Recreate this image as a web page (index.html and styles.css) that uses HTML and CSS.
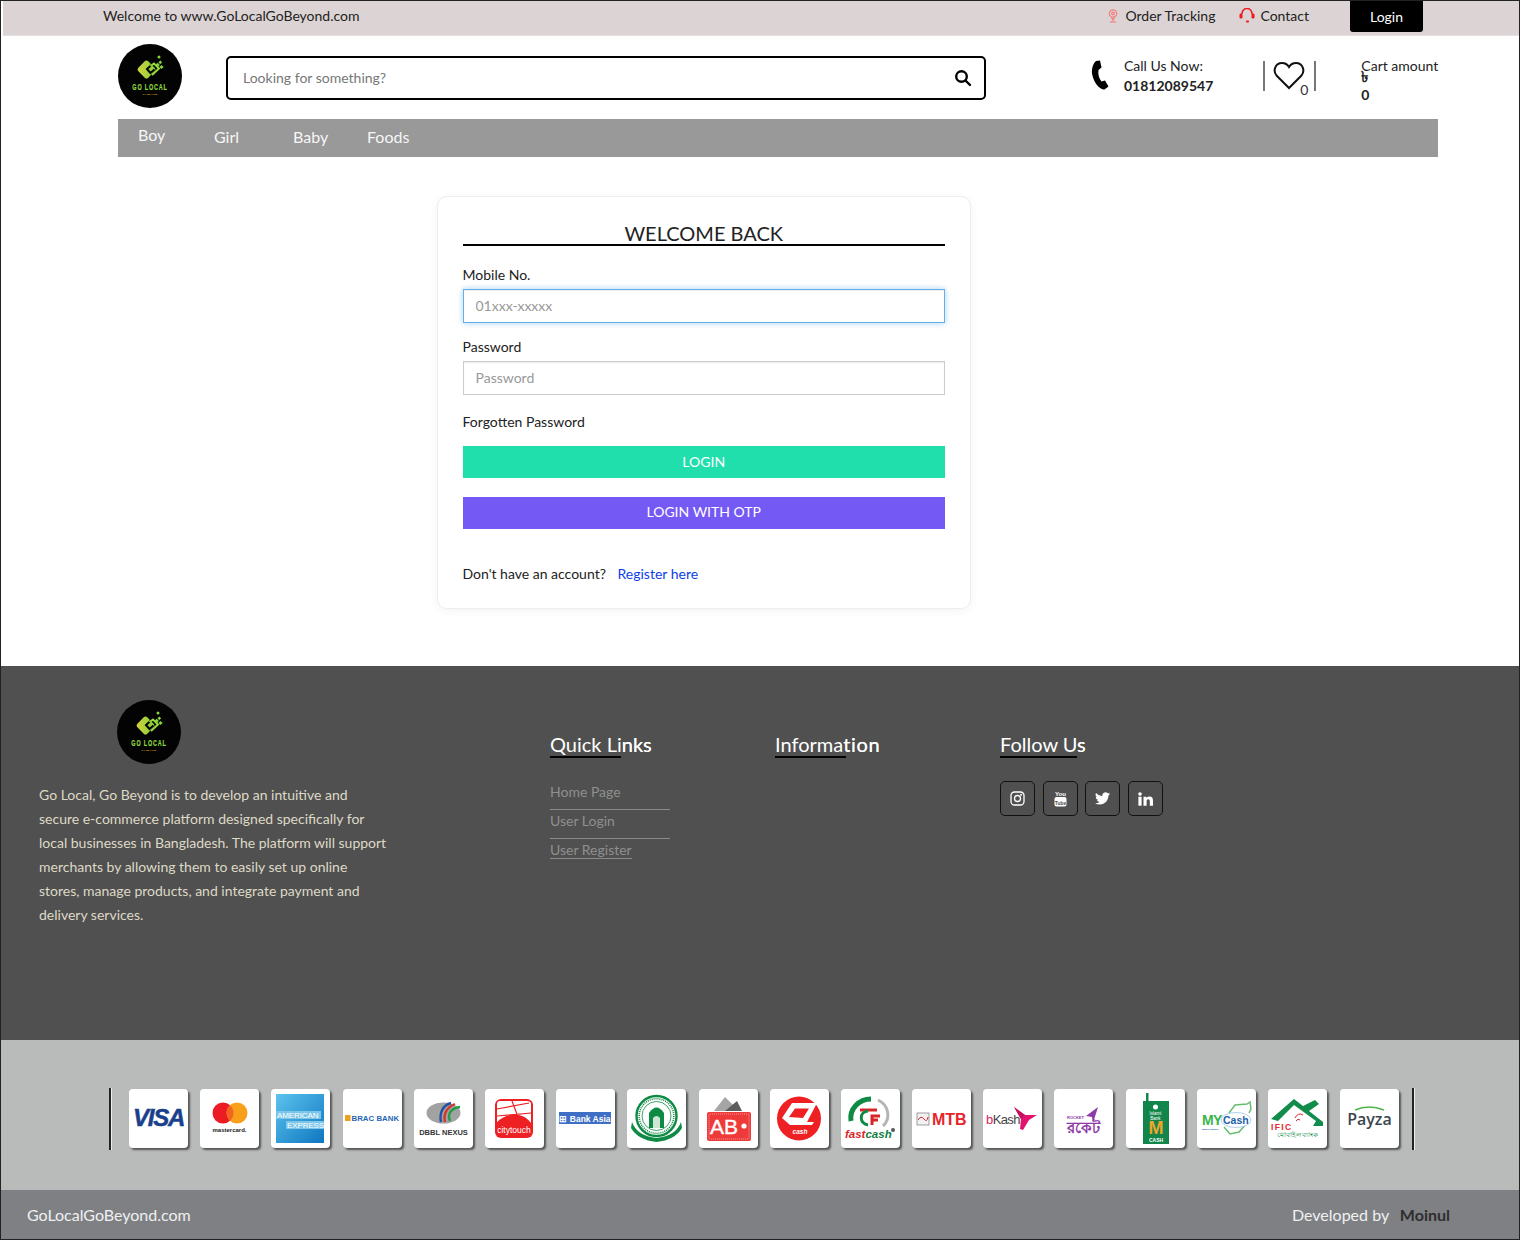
FILE: index.html
```html
<!DOCTYPE html>
<html lang="en">
<head>
  <meta charset="UTF-8" />
  <meta name="viewport" content="width=device-width, initial-scale=1.0"/>
  <title>Go Local Go Beyond - Login</title>
  <link rel="stylesheet" href="styles.css">
</head>
<body>

<svg class="defs" width="0" height="0">
  <defs>
    <linearGradient id="logoGrad" x1="0" y1="1" x2="1" y2="0">
      <stop offset="0" stop-color="#d8d23c"/>
      <stop offset="1" stop-color="#7ccf3c"/>
    </linearGradient>
    <linearGradient id="amexGrad" x1="0" y1="0" x2="1" y2="1">
      <stop offset="0" stop-color="#5cc3ee"/>
      <stop offset="1" stop-color="#0f76c1"/>
    </linearGradient>
    <symbol id="logo" viewBox="0 0 64 64">
      <circle cx="32" cy="32" r="32" fill="#030303"/>
      <rect x="21.500" y="18.500" width="14" height="14" rx="2.500" fill="url(#logoGrad)" transform="rotate(45 28.500 25.500)"/>
      <path d="M34 20.500 L29 25 L32.500 29 L36.500 25.500" fill="none" stroke="#030303" stroke-width="2"/>
      <path d="M32.500 22 L36 19.500 L41 24.500 L34 31" fill="none" stroke="#9ad93e" stroke-width="2"/>
      <rect x="38" y="19.500" width="3.200" height="3.200" fill="#86d63c" transform="rotate(45 39.600 21.100)"/>
      <rect x="42" y="21.500" width="3" height="3" fill="#86d63c" transform="rotate(45 43.500 23)"/>
      <rect x="41" y="17" width="2.600" height="2.600" fill="#86d63c" transform="rotate(45 42.300 18.300)"/>
      <circle cx="41" cy="13" r="1.500" fill="#86d63c"/>
      <text class="logo-name" transform="translate(32 46) scale(.64 1)" text-anchor="middle">GO LOCAL</text>
      <text class="logo-sub" x="32" y="51" text-anchor="middle">GO BEYOND</text>
    </symbol>
  </defs>
</svg>

<div class="page">

  <div class="topbar">
    <span class="welcome">Welcome to www.GoLocalGoBeyond.com</span>
    <div class="topbar-links">
      <a class="top-link track" href="#">
        <svg width="10" height="14" viewBox="0 0 10 14" fill="none" stroke="#f2807c" stroke-width="1.300">
          <circle cx="5" cy="4.500" r="3.700"/><circle cx="5" cy="4.500" r="1.300"/>
          <path d="M3.500 8.500 L5 11 L6.500 8.500 M2 12.800 H8"/>
        </svg>
        Order Tracking
      </a>
      <a class="top-link contact" href="#">
        <svg width="16" height="15" viewBox="0 0 16 15" fill="none" stroke="#f0191e" stroke-width="1.500">
          <path d="M3 6 V5.500 a5 5 0 0 1 10 0 V6"/>
          <rect x="0.500" y="5.500" width="3" height="5" rx="1.200" fill="#f0191e" stroke="none"/>
          <rect x="12.500" y="5.500" width="3" height="5" rx="1.200" fill="#f0191e" stroke="none"/>
          <rect x="7" y="12.500" width="3" height="2" rx=".8" fill="#f0191e" stroke="none"/>
        </svg>
        Contact
      </a>
      <a class="login-btn" href="#">Login</a>
    </div>
  </div>

  <header class="header">
    <svg class="logo"><use href="#logo"/></svg>
    <div class="search">
      <span class="search-text">Looking for something?</span>
      <svg width="18" height="18" viewBox="0 0 18 18" fill="none" stroke="#000" stroke-width="2.400">
        <circle cx="7.500" cy="7.500" r="5.300"/><path d="M11.500 11.500 L16 16" stroke-linecap="round"/>
      </svg>
    </div>
    <div class="call">
      <svg class="call-icon" width="18" height="30" viewBox="0 0 18 30">
        <path d="M5 1 L9 0.500 L10.500 7.500 L7.500 10 C6.800 14 8 18.500 10.500 21.500 L14 20.500 L17.500 26.500 L13.500 29.500 C9 30 3 23 1.300 15 C0.300 10 1.500 4 5 1z" fill="#000"/>
      </svg>
      <div class="call-text">
        <div>Call Us Now:</div>
        <div class="call-number">01812089547</div>
      </div>
    </div>
    <div class="wish">
      <svg width="32" height="30" viewBox="0 0 32 30" fill="none" stroke="#111" stroke-width="2">
        <path d="M16 27 L3.500 14.500 C-0.500 9.500 2.500 2 9 2 C12 2 14.500 3.500 16 6 C17.500 3.500 20 2 23 2 C29.500 2 32.500 9.500 28.500 14.500z"/>
      </svg>
      <span class="wish-count">0</span>
    </div>
    <div class="cart">
      <div>Cart amount</div>
      <div class="taka">৳</div>
      <div class="cart-value">0</div>
    </div>
  </header>

  <nav class="nav">
    <a class="nav-boy" href="#">Boy</a>
    <a class="nav-girl" href="#">Girl</a>
    <a class="nav-baby" href="#">Baby</a>
    <a class="nav-foods" href="#">Foods</a>
  </nav>

  <main class="main">
    <form class="login-card">
      <h2 class="card-title"><span>WELCOME BACK</span></h2>

      <label class="field-label" for="mobile">Mobile No.</label>
      <input class="field is-focus" id="mobile" type="text" placeholder="01xxx-xxxxx" />

      <label class="field-label second" for="password">Password</label>
      <input class="field" id="password" type="password" placeholder="Password" />

      <div class="forgot">Forgotten Password</div>

      <button class="btn btn-login" type="button">LOGIN</button>
      <button class="btn btn-otp" type="button">LOGIN WITH OTP</button>

      <p class="register">Don't have an account? <a href="#">Register here</a></p>
    </form>
  </main>

  <footer>
    <div class="footer-main">
      <div class="about">
        <svg class="logo footer-logo"><use href="#logo"/></svg>
        <p>Go Local, Go Beyond is to develop an intuitive and secure e-commerce platform designed specifically for local businesses in Bangladesh. The platform will support merchants by allowing them to easily set up online stores, manage products, and integrate payment and delivery services.</p>
      </div>
      <div class="foot-col">
        <h3 class="foot-title"><span>Quick Li<i class="tail">nks</i></span></h3>
        <ul class="foot-links">
          <li><a href="#">Home Page</a></li>
          <li><a href="#">User Login</a></li>
          <li><a class="last-link" href="#">User Register</a></li>
        </ul>
      </div>
      <div class="foot-col">
        <h3 class="foot-title"><span>Informa<i class="tail tail-wide">tion</i></span></h3>
      </div>
      <div class="foot-col">
        <h3 class="foot-title"><span class="w-follow">Follow U<i class="tail">s</i></span></h3>
        <div class="socials">
          <a class="social" href="#">
            <svg width="15" height="15" viewBox="0 0 15 15" fill="none" stroke="#fff" stroke-width="1.300">
              <rect x="1" y="1" width="13" height="13" rx="3.500"/><circle cx="7.500" cy="7.500" r="3"/><circle cx="11.200" cy="3.800" r=".4"/>
            </svg>
          </a>
          <a class="social" href="#">
            <svg width="13" height="17" viewBox="0 0 13 17">
              <text class="yt-you" x="6.500" y="5.500" text-anchor="middle">You</text>
              <rect x="0.500" y="7" width="12" height="9.500" rx="2" fill="#fff"/>
              <text class="yt-tube" x="6.500" y="14.500" text-anchor="middle">Tube</text>
            </svg>
          </a>
          <a class="social" href="#">
            <svg width="15" height="13" viewBox="0 0 24 20">
              <path d="M24 2.400a9.800 9.800 0 0 1-2.800.8 4.900 4.900 0 0 0 2.200-2.700 9.800 9.800 0 0 1-3.100 1.200 4.900 4.900 0 0 0-8.400 4.500A14 14 0 0 1 1.700 1a4.900 4.900 0 0 0 1.500 6.600 4.900 4.900 0 0 1-2.200-.6v.1a4.900 4.900 0 0 0 3.900 4.800 4.900 4.900 0 0 1-2.200.1 4.900 4.900 0 0 0 4.600 3.400A9.900 9.900 0 0 1 0 17.400 14 14 0 0 0 7.500 19.600c9.100 0 14-7.500 14-14v-.6A10 10 0 0 0 24 2.400z" fill="#fff"/>
            </svg>
          </a>
          <a class="social" href="#">
            <svg width="15" height="14" viewBox="0 0 15 14" fill="#fff">
              <circle cx="2" cy="2" r="1.800"/><rect x="0.400" y="4.700" width="3.200" height="9"/>
              <path d="M5.500 4.700h3v1.300c.6-1 1.700-1.500 3-1.500 2.500 0 3.500 1.600 3.500 4.200v5h-3.200V9.200c0-1.200-.4-2-1.500-2s-1.700.8-1.700 2v4.500H5.500z"/>
            </svg>
          </a>
        </div>
      </div>
    </div>

    <div class="pay-band">
      <span class="pay-bar"></span>
      <div class="pay-list">

        <div class="pay-card">
          <svg viewBox="0 0 59 59"><text class="t-visa" x="29.500" y="37" text-anchor="middle">VISA</text></svg>
        </div>

        <div class="pay-card">
          <svg viewBox="0 0 59 59">
            <circle cx="23" cy="24" r="10.500" fill="#eb1c24"/><circle cx="37" cy="24" r="10.500" fill="#f9a01b"/>
            <path d="M30 16.200a10.500 10.500 0 0 1 0 15.600 10.500 10.500 0 0 1 0-15.600z" fill="#f26522"/>
            <text class="t-mc" x="29.500" y="43" text-anchor="middle">mastercard.</text>
          </svg>
        </div>

        <div class="pay-card">
          <svg viewBox="0 0 59 59">
            <rect x="5" y="5" width="48" height="49" fill="url(#amexGrad)"/>
            <rect x="5" y="22" width="45" height="8" fill="#7cc6ea"/>
            <rect x="15" y="32" width="38" height="8" fill="#7cc6ea"/>
            <text class="t-amex" x="6" y="29">AMERICAN</text>
            <text class="t-amex" x="16" y="39">EXPRESS</text>
          </svg>
        </div>

        <div class="pay-card">
          <svg viewBox="0 0 59 59">
            <rect x="2" y="26" width="5.500" height="6" fill="#e8a21c"/>
            <text class="t-brac" x="8.500" y="32">BRAC BANK</text>
          </svg>
        </div>

        <div class="pay-card">
          <svg viewBox="0 0 59 59" fill="none">
            <ellipse cx="29.500" cy="24" rx="17" ry="10.500" fill="#a2a2a2"/>
            <path d="M27 33 C25 24 29 16 37 14" stroke="#2350a5" stroke-width="2.400"/>
            <path d="M31 33 C29 25 33 18 41 15" stroke="#d8352a" stroke-width="2.400"/>
            <path d="M36 32 C33 25 37 19 46 18" stroke="#1f9e48" stroke-width="2.400"/>
            <text class="t-dbbl" x="29.500" y="46" text-anchor="middle">DBBL NEXUS</text>
          </svg>
        </div>

        <div class="pay-card">
          <svg viewBox="0 0 59 59" fill="none">
            <rect x="10" y="10" width="38" height="39" rx="6" fill="#ed2024"/>
            <path d="M12 33 V15 q0-3 3-3 H42 q4 0 4 3 V34 C38 23 22 23 12 33z" fill="#fff"/>
            <path d="M12 20 L44 14 M27 12 L33 28 M12 27 L46 24" stroke="#ed2024" stroke-width="1.200"/>
            <text class="t-city" x="29" y="44" text-anchor="middle">citytouch</text>
          </svg>
        </div>

        <div class="pay-card">
          <svg viewBox="0 0 59 59">
            <rect x="3" y="23" width="52" height="12" fill="#3f6fc4"/>
            <text class="t-asia" x="29" y="32.500" text-anchor="middle">⊞ Bank Asia</text>
          </svg>
        </div>

        <div class="pay-card">
          <svg viewBox="0 0 59 59" fill="none">
            <circle cx="29.500" cy="27" r="20" stroke="#0f8a45" stroke-width="2.400"/>
            <circle cx="29.500" cy="27" r="14.500" stroke="#0f8a45" stroke-width=".8"/>
            <circle cx="29.500" cy="27" r="17.300" stroke="#0f8a45" stroke-width="1.600" stroke-dasharray="1 1"/>
            <path d="M22 39 V24 q7.500-11 15 0 V39z" fill="#0f8a45"/>
            <path d="M26 39 V29 q3.500-4 7 0 V39z" fill="#cfe6d7"/>
            <path d="M5 33 q5 14 24.500 16 q19.500-2 24.500-16 l1 6 q-7 12-25.500 14 q-18.500-2-25.500-14z" fill="#0f8a45"/>
          </svg>
        </div>

        <div class="pay-card">
          <svg viewBox="0 0 59 59">
            <path d="M15 22 L26 8 L40 22z" fill="#a5a5a5"/>
            <path d="M26 22 L38 12 L43 22z" fill="#5d5d5d"/>
            <rect x="8" y="23" width="44" height="29" rx="2" fill="#ee3a39"/>
            <rect x="10" y="25" width="40" height="25" rx="1" fill="none" stroke="#fff" stroke-width=".5" stroke-dasharray="1 1"/>
            <text class="t-ab" x="25" y="45" text-anchor="middle">AB</text>
            <circle cx="45" cy="37" r="2.600" fill="#fff"/>
          </svg>
        </div>

        <div class="pay-card">
          <svg viewBox="0 0 59 59" fill="none">
            <circle cx="29" cy="29.500" r="22" fill="#ee2024"/>
            <path d="M22 14 H47 L37 33 L44 33 L42 36 H20 L12 29z M25 19.500 L19 28 L33 29 L39 19.500z" fill="#fff" fill-rule="evenodd"/>
            <text class="t-qcash" x="30" y="45" text-anchor="middle">cash</text>
          </svg>
        </div>

        <div class="pay-card">
          <svg viewBox="0 0 59 59" fill="none">
            <path d="M30 10 C18 10 8 20 10 32" stroke="#0f8a45" stroke-width="5"/>
            <path d="M37 11 C48 16 50 30 42 37" stroke="#b5b5b5" stroke-width="3"/>
            <path d="M19 21 H36" stroke="#d8252a" stroke-width="3"/>
            <path d="M27 22 C18 23 18 34 27 36" stroke="#0f8a45" stroke-width="3"/>
            <path d="M31 36 V27 H39 M31 31 H37" stroke="#d8252a" stroke-width="3"/>
            <text class="t-fast" x="4" y="49"><tspan fill="#d8252a">fast</tspan><tspan fill="#0f7f3f">cash</tspan></text>
            <circle cx="52" cy="41" r="2" fill="#555"/>
          </svg>
        </div>

        <div class="pay-card">
          <svg viewBox="0 0 59 59">
            <rect x="5" y="24" width="12" height="12" fill="#f2f2f2" stroke="#888" stroke-width=".8"/>
            <path d="M6 31 q3-5 6-1 t4-2" fill="none" stroke="#d8252a" stroke-width="1"/>
            <text class="t-mtb" x="20" y="35.500">MTB</text>
          </svg>
        </div>

        <div class="pay-card">
          <svg viewBox="0 0 59 59">
            <text class="t-bkash" x="3" y="35"><tspan fill="#d9235f">b</tspan>Kash</text>
            <path d="M31 18 L42 26 L54 26 L46 31 L40 41 L37 40 L38 30z" fill="#e2136e"/>
            <path d="M31 18 L42 26 L38 30z" fill="#c4105a"/>
          </svg>
        </div>

        <div class="pay-card">
          <svg viewBox="0 0 59 59">
            <path d="M44 18 L32 27 L38 28 L39 34z" fill="#8e3aa8"/>
            <text class="t-rocket" x="13" y="30">ROCKET</text>
            <text class="t-rocket-bn" x="29.500" y="44" text-anchor="middle">রকেট</text>
          </svg>
        </div>

        <div class="pay-card">
          <svg viewBox="0 0 59 59">
            <rect x="20" y="4" width="2.500" height="9" fill="#11854a"/>
            <rect x="17" y="12" width="26" height="43" fill="#11854a"/>
            <circle cx="29.500" cy="18" r="2.500" fill="#fff"/>
            <text class="t-mc-small" x="29.500" y="26" text-anchor="middle">Islami</text>
            <text class="t-mc-small" x="29.500" y="31" text-anchor="middle">Bank</text>
            <text class="t-m" x="30" y="45" text-anchor="middle">M</text>
            <text class="t-mc-cash" x="30" y="52.500" text-anchor="middle">CASH</text>
          </svg>
        </div>

        <div class="pay-card">
          <svg viewBox="0 0 59 59" fill="none">
            <path d="M32 24 L38 16 L50 15 L53 13 L54 20 L52 24 M27 38 L33 45 L42 43 L50 34" stroke="#67bd6f" stroke-width="1.500"/>
            <text class="t-my" x="5" y="36">MY</text>
            <ellipse cx="39" cy="31" rx="15" ry="7.500" fill="#fff" stroke="#8fbce6" stroke-width=".7"/>
            <text class="t-mycash" x="26" y="35">Cash</text>
            <text class="t-mini" x="5" y="41">Mobile Money</text>
          </svg>
        </div>

        <div class="pay-card">
          <svg viewBox="0 0 59 59" fill="none">
            <path d="M3 30 L26 10 L35 17 L47 11 L51 15 L41 22 L55 33 L55 37 L45 37 L48 32 L26 16 L10 32z" fill="#118c4a"/>
            <path d="M27 29 q3-6 8-3 M28 32 q2-3 4-1" stroke="#d8252a" stroke-width="1"/>
            <text class="t-ific" x="3" y="41">IFIC</text>
            <text class="t-ific-bn" x="29.500" y="48" text-anchor="middle">মোবাইল ব্যাংক</text>
          </svg>
        </div>

        <div class="pay-card pay-last">
          <svg viewBox="0 0 59 59" fill="none">
            <path d="M15 21 q14-6 29 0" stroke="#4cb648" stroke-width="1.400"/>
            <text class="t-payza" x="29.500" y="36" text-anchor="middle">Payza</text>
          </svg>
        </div>

      </div>
      <span class="pay-bar"></span>
    </div>

    <div class="copy">
      <span class="copy-site">GoLocalGoBeyond.com</span>
      <span class="copy-dev">Developed by <b>Moinul</b></span>
    </div>
  </footer>

</div>

</body>
</html>
```

FILE: styles.css
```css
* {
  box-sizing: border-box;
}

body {
  margin: 0;
  font-family: "Lato", Arial, sans-serif;
  font-size: 14px;
  color: #222;
  background-color: #fff;
}

a {
  color: inherit;
  text-decoration: none;
}

.defs {
  position: absolute;
}

.page {
  height: 1240px;
  border: 1px solid #222;
  overflow: hidden;
}

/* top bar */
.topbar {
  display: flex;
  align-items: flex-start;
  height: 35px;
  margin-left: 2px;
  padding-left: 100px;
  background-color: #dcd4d4;
  border-bottom: 1px solid #e4e0e0;
}

.welcome {
  line-height: 30px;
}

.topbar-links {
  display: flex;
  margin-left: auto;
  margin-right: 96px;
}

.top-link {
  display: flex;
  align-items: center;
  gap: 7px;
  height: 29px;
  line-height: 29px;
}

.track {
  margin-right: 24px;
}

.contact {
  gap: 5px;
  margin-right: 41px;
}

.login-btn {
  display: block;
  width: 73px;
  height: 32px;
  margin-top: -1px;
  line-height: 33px;
  text-align: center;
  color: #fff;
  background-color: #000;
  border-radius: 0 0 3px 3px;
}

/* header */
.header {
  display: flex;
  align-items: flex-start;
  height: 83px;
  padding-left: 117px;
}

.logo {
  display: block;
  width: 64px;
  height: 64px;
  margin-top: 8px;
}

.logo-name {
  font-family: "Liberation Sans", sans-serif;
  font-size: 8.500px;
  font-weight: bold;
  letter-spacing: 1.300px;
  stroke: #8fd93f;
  stroke-width: .2px;
  fill: #8fd93f;
}

.logo-sub {
  font-family: "Liberation Sans", sans-serif;
  font-size: 2.500px;
  font-weight: bold;
  fill: #c79522;
}

.search {
  display: flex;
  align-items: center;
  justify-content: space-between;
  width: 760px;
  height: 44px;
  margin: 20px 0 0 44px;
  padding: 0 12px 2px 15px;
  border: 2px solid #000;
  border-radius: 5px;
}

.search svg {
  margin-top: 2px;
}

.search-text {
  color: #777;
}

.call {
  display: flex;
  margin: 20px 0 0 105px;
}

.call-icon {
  margin: 4px 15px 0 0;
}

.call-text {
  line-height: 20px;
}

.call-number {
  font-weight: bold;
}

.wish {
  position: relative;
  width: 53px;
  height: 30px;
  margin: 25px 0 0 50px;
  padding-left: 8px;
  border-left: 2px solid #777;
  border-right: 2px solid #777;
}

.wish-count {
  position: absolute;
  right: 6px;
  bottom: -6px;
  line-height: 14px;
  color: #333;
}

.cart {
  margin: 21px 0 0 45px;
  line-height: 18px;
}

.taka {
  height: 11px;
  margin-top: -5px;
  font-size: 15px;
  line-height: 12px;
  font-weight: bold;
}

.cart-value {
  margin-top: 5px;
  font-weight: bold;
}

/* nav */
.nav {
  position: relative;
  height: 38px;
  margin: 0 81px 0 117px;
  background-color: #999;
  font-size: 16px;
  color: #f6f6f6;
}

.nav a {
  position: absolute;
}

.nav-boy {
  left: 20px;
  top: 6px;
}

.nav-girl {
  left: 96px;
  top: 8px;
}

.nav-baby {
  left: 175px;
  top: 8px;
}

.nav-foods {
  left: 249px;
  top: 8px;
}

/* login card */
.main {
  height: 509px;
  padding: 39px 0 0 436px;
}

.login-card {
  width: 534px;
  height: 413px;
  padding: 25px 25px 25px 24.500px;
  background-color: #fff;
  border: 1px solid #eee;
  border-radius: 10px;
  box-shadow: 0 2px 10px rgba(0, 0, 0, .05);
}

.card-title {
  margin: 0 0 19px;
  height: 24px;
  font-size: 20px;
  font-weight: 400;
  line-height: 23px;
  text-align: center;
  color: #222;
  border-bottom: 2px solid #000;
}

.field-label {
  display: block;
  line-height: 20px;
  margin-bottom: 4px;
}

.second {
  margin-top: 14px;
}

.field {
  display: block;
  width: 100%;
  height: 34px;
  padding: 0 12px 2px;
  font-family: inherit;
  font-size: 14px;
  border: 1px solid #ccc;
  outline: none;
  box-shadow: inset 0 1px 1px rgba(0, 0, 0, .08);
}

.field::placeholder {
  color: #999;
}

.is-focus {
  border-color: #66afe9;
  box-shadow: inset 0 1px 1px rgba(0, 0, 0, .08), 0 0 6px rgba(102, 175, 233, .6);
}

.forgot {
  margin-top: 17px;
  line-height: 20px;
}

.btn {
  display: block;
  width: 100%;
  height: 32px;
  padding: 0 0 2px;
  font-family: inherit;
  font-size: 14px;
  color: #fff;
  border: none;
}

.btn-login {
  margin-top: 14px;
  background-color: #20dfac;
}

.btn-otp {
  margin-top: 19px;
  padding-bottom: 4px;
  background-color: #7459f5;
}

.register {
  margin: 35px 0 0;
  line-height: 20px;
}

.register a {
  margin-left: 8px;
  color: #0d3ee8;
}

/* footer */
.footer-main {
  display: flex;
  height: 374px;
  background-color: #505050;
}

.about {
  width: 549px;
  padding: 34px 0 0 38px;
}

.footer-logo {
  margin: 0 0 19px 78px;
}

.about p {
  width: 352px;
  margin: 0;
  line-height: 24px;
  color: #ded9c6;
}

.foot-col {
  width: 225px;
  padding-top: 66px;
}

.foot-title {
  margin: 0 0 24px;
  height: 25px;
  font-size: 20px;
  font-weight: 400;
  line-height: 24px;
  color: #fff;
}

.foot-title span {
  display: block;
  height: 26px;
  background: linear-gradient(#000, #000) no-repeat left bottom;
  background-size: 71px 2px;
}

.foot-title .w-follow {
  background-size: 77px 2px;
}

/* the part of the title past the underline reads a touch heavier */
.tail {
  font-style: normal;
  text-shadow: 0 0 .6px #fff;
}

.tail-wide {
  letter-spacing: .7px;
}

.foot-links {
  width: 120px;
  margin: 0;
  padding: 0;
  list-style: none;
  color: #8f8f8f;
}

.foot-links li {
  height: 29px;
  padding-top: 1px;
  line-height: 20px;
  white-space: nowrap;
  border-bottom: 1px solid #8a8a8a;
}

.foot-links li:last-child {
  border-bottom: none;
}

.last-link {
  border-bottom: 1px solid #8a8a8a;
}

.socials {
  display: flex;
  gap: 7.670px;
}

.social {
  display: flex;
  align-items: center;
  justify-content: center;
  width: 35px;
  height: 35px;
  border: 1px solid #111;
  border-radius: 5px;
}

.yt-you {
  font-family: "Liberation Sans", sans-serif;
  font-size: 6px;
  font-weight: bold;
  fill: #fff;
}

.yt-tube {
  font-family: "Liberation Sans", sans-serif;
  font-size: 5px;
  font-weight: bold;
  fill: #505050;
}

/* payment strip */
.pay-band {
  display: flex;
  align-items: center;
  height: 150px;
  padding: 8px 0 0 108px;
  background-color: #b9bbba;
}

.pay-bar {
  width: 2px;
  height: 62px;
  margin-top: -1px;
  background-color: #222;
  box-shadow: 1px 0 0 #eee;
}

.pay-list {
  display: flex;
  gap: 12.200px;
  margin: -1px 13px 0 18px;
}

.pay-last {
  margin-left: 1.200px;
}

.pay-card {
  width: 59px;
  height: 59px;
  background-color: #fff;
  border-radius: 4px;
  box-shadow: 2px 2px 2px #555;
}

.pay-card svg {
  display: block;
  width: 59px;
  height: 59px;
  overflow: visible;
}

.pay-card text {
  font-family: "Liberation Sans", sans-serif;
  font-weight: bold;
}

.pay-card .t-visa {
  font-size: 24px;
  font-style: italic;
  letter-spacing: -1.200px;
  stroke: #1a3f8b;
  stroke-width: .5px;
  fill: #1a3f8b;
}

.pay-card .t-mc {
  font-size: 6px;
  fill: #222;
}

.pay-card .t-amex {
  font-size: 8px;
  font-weight: normal;
  letter-spacing: -.1px;
  fill: #fff;
}

.pay-card .t-brac {
  font-size: 7.800px;
  letter-spacing: .05px;
  fill: #1f66b5;
}

.pay-card .t-dbbl {
  font-size: 7.500px;
  fill: #333;
}

.pay-card .t-city {
  font-size: 8.500px;
  font-weight: normal;
  fill: #fff;
}

.pay-card .t-asia {
  font-size: 8.500px;
  fill: #fff;
}

.pay-card .t-ab {
  font-size: 21px;
  font-weight: normal;
  stroke: #fff;
  stroke-width: .4px;
  fill: #fff;
}

.pay-card .t-qcash {
  font-size: 6.500px;
  font-style: italic;
  fill: #fff;
}

.pay-card .t-fast {
  font-size: 11.500px;
  font-style: italic;
}

.pay-card .t-mtb {
  font-size: 16px;
  fill: #e8252b;
}

.pay-card .t-bkash {
  font-size: 13px;
  font-weight: normal;
  fill: #444;
  letter-spacing: -.6px;
}

.pay-card .t-rocket {
  font-size: 4px;
  fill: #8e3aa8;
}

.pay-card .t-rocket-bn {
  font-family: "Noto Sans", "DejaVu Sans", sans-serif;
  font-size: 15px;
  fill: #8e3aa8;
}

.pay-card .t-mc-small {
  font-size: 4.500px;
  font-weight: normal;
  fill: #fff;
}

.pay-card .t-m {
  font-size: 18px;
  fill: #f0a52a;
}

.pay-card .t-mc-cash {
  font-size: 5px;
  fill: #fff;
}

.pay-card .t-my {
  font-size: 14px;
  letter-spacing: -.6px;
  fill: #39b54a;
}

.pay-card .t-mycash {
  font-size: 10.500px;
  fill: #1e5fa8;
}

.pay-card .t-mini {
  font-size: 2.500px;
  fill: #1e5fa8;
}

.pay-card .t-ific {
  font-size: 8.500px;
  letter-spacing: 1.400px;
  fill: #e8252b;
}

.pay-card .t-ific-bn {
  font-family: "Noto Sans", "DejaVu Sans", sans-serif;
  font-size: 7px;
  font-weight: normal;
  fill: #118c4a;
}

.pay-card .t-payza {
  font-family: "Open Sans", sans-serif;
  font-size: 16px;
  font-weight: 600;
  fill: #3c4650;
}

/* bottom line */
.copy {
  display: flex;
  justify-content: space-between;
  height: 49px;
  padding: 0 69px 0 26px;
  font-size: 16px;
  line-height: 50px;
  color: #f0f0f0;
  background-color: #7e8084;
}

.copy-dev b {
  margin-left: 7px;
  color: #2e2e2e;
}
```
